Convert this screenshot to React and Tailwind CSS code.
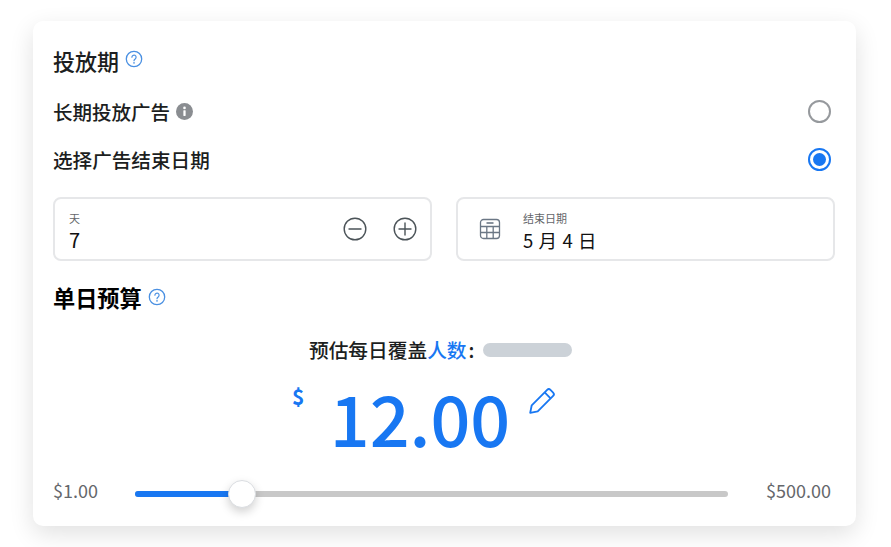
function Help({ className }) {
  return (
    <svg viewBox="0 0 18 18" className={className} fill="none">
      <circle cx="9" cy="9" r="7.7" stroke="#4a90e2" strokeWidth="1.3" />
      <path d="M6.9 7.2a2.1 2.1 0 1 1 3.3 1.7c-.8.55-1.2.9-1.2 1.8" stroke="#4a90e2" strokeWidth="1.2" strokeLinecap="round" />
      <circle cx="9" cy="12.9" r=".8" fill="#4a90e2" />
    </svg>
  );
}
function RoundBtn({ plus }) {
  return (
    <svg viewBox="0 0 24 24" className="w-6 h-6" fill="none" stroke="#4b5358" strokeWidth="1.4" strokeLinecap="round">
      <circle cx="12" cy="12" r="10.8" />
      <path d="M6 12h12" />
      {plus && <path d="M12 6v12" />}
    </svg>
  );
}
export default function App() {
  return (
    <div className="w-[891px] h-[547px] bg-white pt-[21px] pl-[33px] font-['Noto_Sans_CJK_SC','Noto_Sans',sans-serif] text-black">
      <div className="w-[823px] h-[505px] bg-white rounded-[10px] shadow-[0_8px_24px_rgba(0,0,0,0.12)] pl-[20px] pr-[21px] flex flex-col">
        <div className="h-[26px] mt-[26px] flex items-center gap-[6px]">
          <span className="text-[22px] leading-[26px] font-medium text-[#1c1e21]">投放期</span>
          <Help className="w-[18px] h-[18px] -mt-[3px]" />
        </div>
        <div className="h-[28px] mt-[25px] flex items-center justify-between pr-[4px]">
          <div className="flex items-center gap-[6px]">
            <span className="text-[19.5px] leading-[28px] font-medium text-[#1c1e21]">长期投放广告</span>
            <svg viewBox="0 0 18 18" className="w-[17px] h-[17px] -mt-[2px]">
              <circle cx="9" cy="9" r="9" fill="#8a8d91" />
              <rect x="7.8" y="7.6" width="2.4" height="6.2" rx=".5" fill="#fff" />
              <circle cx="9" cy="5.2" r="1.4" fill="#fff" />
            </svg>
          </div>
          <span className="w-[23px] h-[23px] -mt-[2px] rounded-full border-2 border-[#96999d] bg-white" />
        </div>
        <div className="h-[28px] mt-[20px] flex items-center justify-between pr-[4px]">
          <span className="text-[19.6px] leading-[28px] font-medium text-[#1c1e21]">选择广告结束日期</span>
          <span className="w-[23px] h-[23px] -mt-[2px] rounded-full border-2 border-[#1877f2] flex items-center justify-center">
            <span className="w-[13px] h-[13px] rounded-full bg-[#1877f2]" />
          </span>
        </div>
        <div className="mt-[23px] flex gap-[24px]">
          <div className="w-[379px] h-[64px] rounded-[8px] border-2 border-[#e6e7e9] flex items-center justify-between pl-[14px] pr-[13px]">
            <div className="flex flex-col mt-[6px]">
              <span className="text-[11px] leading-[14px] text-[#65676b]">天</span>
              <span className="text-[20px] leading-[26px] mt-[2px] text-[#111]">7</span>
            </div>
            <div className="flex items-center gap-[26px]">
              <RoundBtn />
              <RoundBtn plus />
            </div>
          </div>
          <div className="w-[379px] h-[64px] rounded-[8px] border-2 border-[#e6e7e9] flex items-center pl-[20px]">
            <svg viewBox="0 0 24 24" className="w-[24px] h-[24px]" fill="none" stroke="#6b7785" strokeWidth="1.3">
              <rect x="2.5" y="2.5" width="19" height="19" rx="3" />
              <path d="M2.5 9.5h19M2.5 15.5h19M8.8 9.5v12M15.2 9.5v12" />
              <path d="M8.5 6h7" strokeWidth="1.6" />
            </svg>
            <div className="flex flex-col ml-[21px] mt-[6px]">
              <span className="text-[11px] leading-[14px] text-[#65676b]">结束日期</span>
              <span className="text-[18.5px] leading-[26px] mt-[2px] tracking-[0.6px] text-[#111] whitespace-pre">5 月 4 日</span>
            </div>
          </div>
        </div>
        <div className="h-[28px] mt-[22px] flex items-center gap-[6px]">
          <span className="text-[22.2px] leading-[28px] font-bold text-black">单日预算</span>
          <Help className="w-[18px] h-[18px]" />
        </div>
        <div className="mt-[26px] h-[26px] flex items-center pl-[256px]">
          <span className="text-[19.7px] leading-[26px] font-medium text-[#1c1e21] whitespace-nowrap">
            预估每日覆盖<span className="text-[#1877f2]">人数</span>
            <span className="ml-[2px]">:</span>
          </span>
          <span className="w-[89px] h-[14px] rounded-full bg-[#ccd2d8] ml-[9px]" />
        </div>
        <div className="relative h-[80px] mt-[19px] flex justify-center">
          <span className="absolute left-[239px] top-[1px] text-[21px] leading-[26px] font-bold text-[#1877f2]">$</span>
          <span className="text-[70px] leading-[69px] font-medium text-[#1877f2] -ml-[48px]">12.00</span>
          <svg viewBox="0 0 28 28" className="absolute left-[474px] top-[4px] w-[30px] h-[30px]" fill="none" stroke="#1877f2" strokeWidth="1.7" strokeLinejoin="round">
            <path d="M3 25l1.4-7L18.8 3.6a2.2 2.2 0 0 1 3.1 0l2.5 2.5a2.2 2.2 0 0 1 0 3.1L10 23.6z" />
            <path d="M16.5 6l5.5 5.5" />
          </svg>
        </div>
        <div className="mt-[17px] h-[28px] flex items-center">
          <span className="w-[82px] text-[18px] leading-[28px] -mt-[6px] text-[#65676b] shrink-0">$1.00</span>
          <div className="relative w-[593px] h-[6px] rounded-full bg-[#c8c8c8] mt-[2px] shrink-0">
            <div className="h-[6px] w-[100px] rounded-full bg-[#1877f2]" />
            <span className="absolute left-[93px] -top-[11px] w-[28px] h-[28px] rounded-full bg-white border border-[#dadde1] shadow-[0_4px_10px_rgba(0,0,0,0.18)]" />
          </div>
          <span className="ml-auto pr-[4px] text-[18px] leading-[28px] -mt-[6px] text-[#65676b]">$500.00</span>
        </div>
      </div>
    </div>
  );
}
